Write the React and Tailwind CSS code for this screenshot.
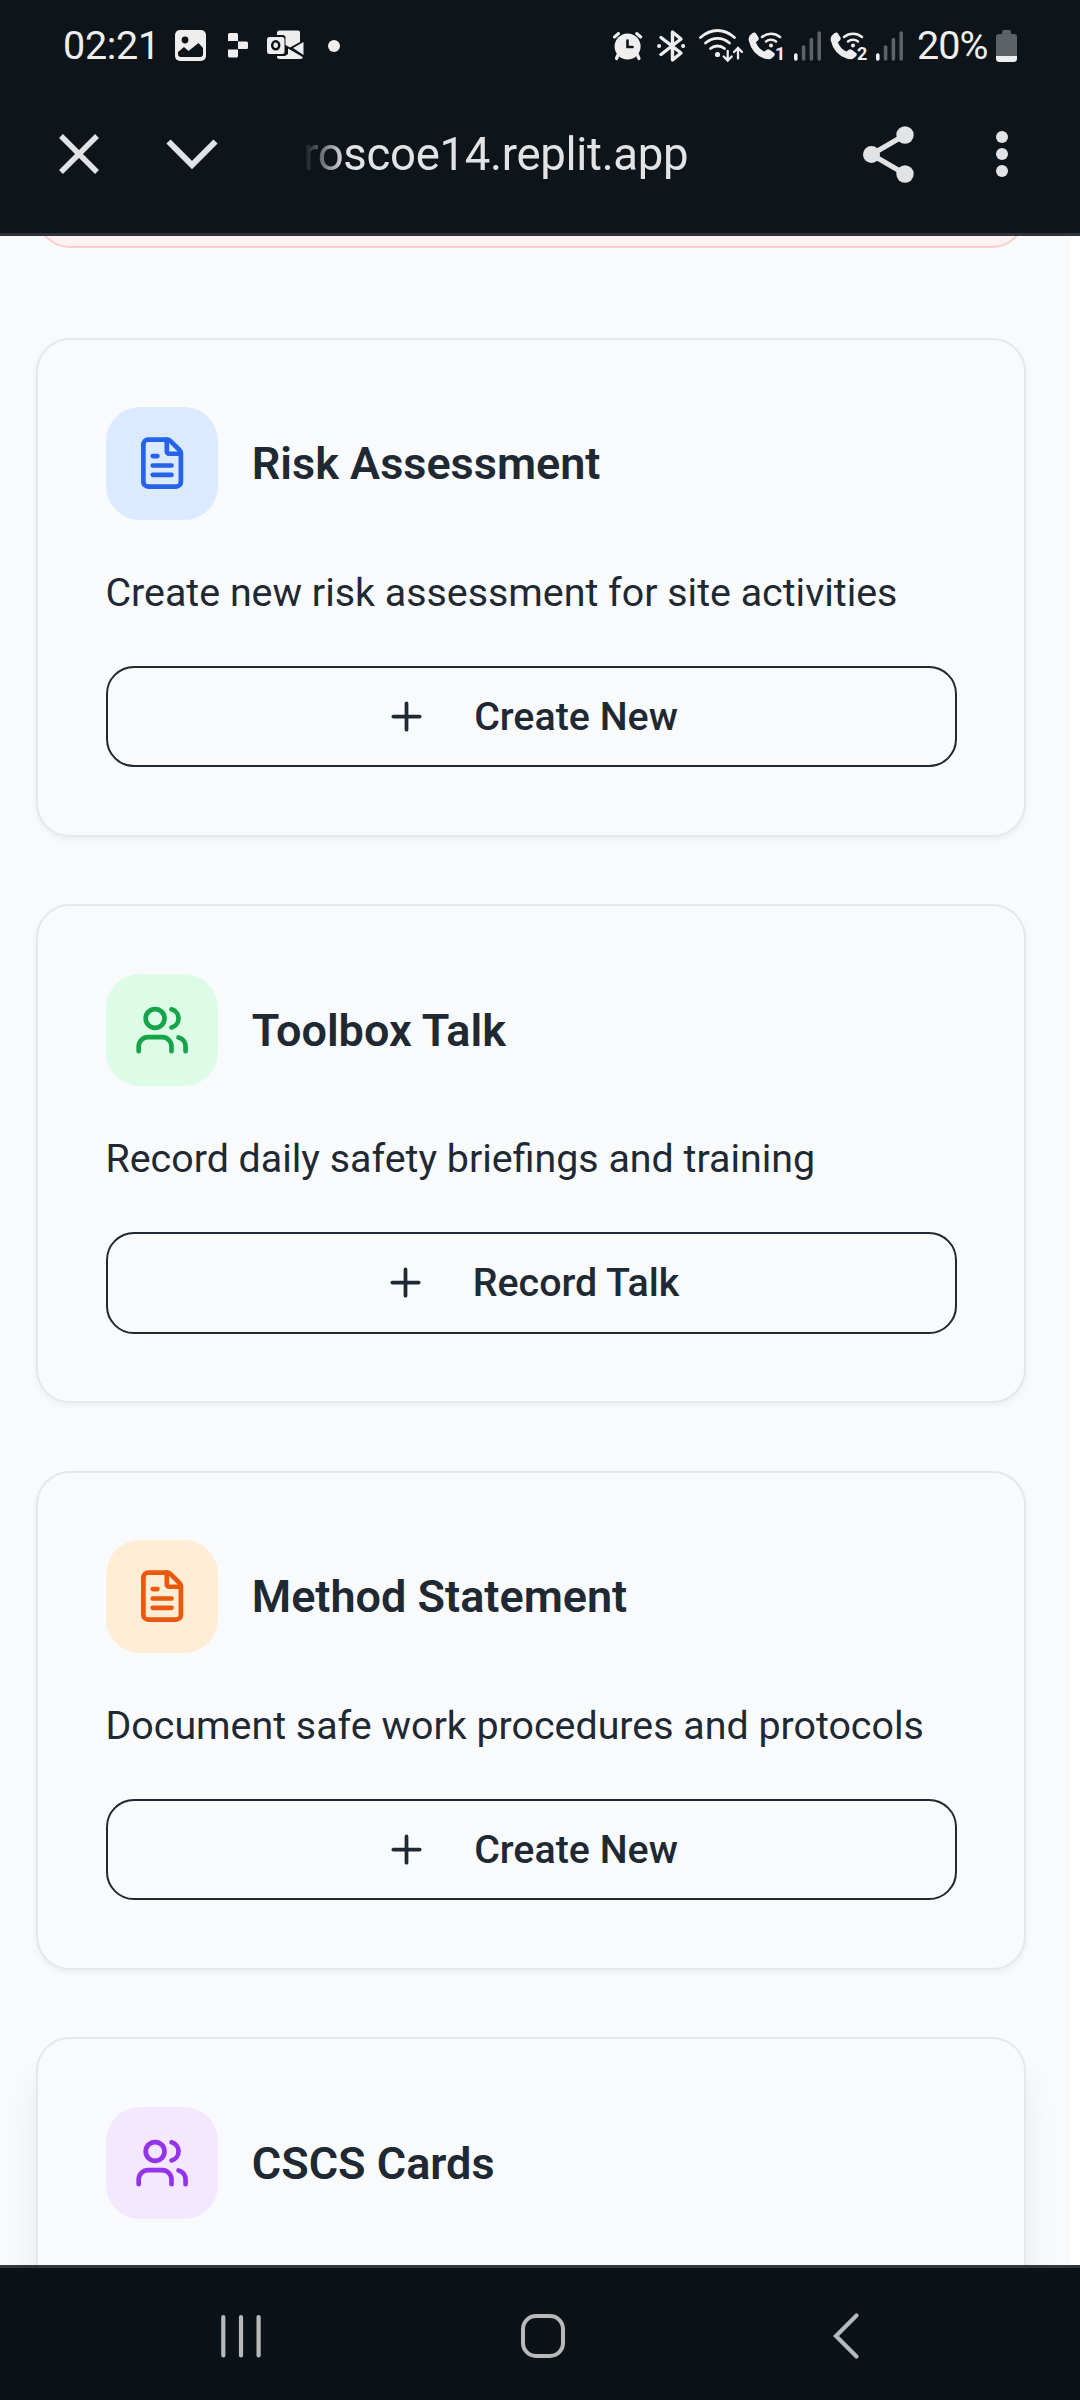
import React from "react";
import { FileText, Plus, Users } from "lucide-react";

const CARDS = [
  {
    title: "Risk Assessment",
    text: "Create new risk assessment for site activities",
    action: "Create New",
    icon: "file",
    tone: "bg-[#dbeafe] text-[#2563eb]",
  },
  {
    title: "Toolbox Talk",
    text: "Record daily safety briefings and training",
    action: "Record Talk",
    icon: "users",
    tone: "bg-[#dcfce7] text-[#16a34a]",
  },
  {
    title: "Method Statement",
    text: "Document safe work procedures and protocols",
    action: "Create New",
    icon: "file",
    tone: "bg-[#ffedd5] text-[#ea580c]",
  },
  {
    title: "CSCS Cards",
    icon: "users",
    tone: "bg-[#f3e8ff] text-[#9333ea]",
    raised: true,
  },
];

function ImageIcon() {
  return (
    <svg className="ml-[17px] shrink-0" width="32" height="34" viewBox="176 29 32 34">
      <rect x="176" y="30" width="31" height="31" rx="5" fill="#eeeeee" />
      <circle cx="186" cy="40" r="3.4" fill="#0d141a" />
      <path d="M179 54v-2l6-5 4.500 4 10-8 4.500 5v6q0 3-3 3h-19q-3 0-3-3z" fill="#0d141a" />
    </svg>
  );
}

function ReplitIcon() {
  return (
    <svg className="ml-[20px] shrink-0" width="22" height="34" viewBox="228 29 22 34" fill="#eeeeee">
      <path d="M230.500 33h7q1.500 0 1.500 1.500V41h-10v-6.500q0-1.500 1.500-1.500zM239 41.500h8.500q1.500 0 1.500 1.500v4.500q0 1.500-1.500 1.500H239zM229 49.500h10V56q0 1.500-1.500 1.500h-7Q229 57.500 229 56z" />
    </svg>
  );
}

function OutlookIcon() {
  return (
    <svg className="ml-[17px] shrink-0" width="39" height="34" viewBox="266 29 39 34">
      <path d="M277 33q0-2.500 2.500-2.500H298q2 0 2 2v9.500l-10 5.500-4.500-2.500v-8.500l-2-1.500H277z" fill="#eeeeee" />
      <path d="M303.500 42v13l-10.500-7zM277 56h8l3-2v-5.500L301 56l2 1.500q-1 1.500-3 1.500h-20.500q-2.500 0-2.500-2.500z" fill="#eeeeee" />
      <rect x="267" y="37" width="17.500" height="17" rx="2.500" fill="#eeeeee" />
      <ellipse cx="275.700" cy="45.300" rx="3.500" ry="4" fill="none" stroke="#0d141a" strokeWidth="2.500" />
    </svg>
  );
}

function AlarmIcon() {
  return (
    <svg className="shrink-0" width="30" height="34" viewBox="613 29 30 34" fill="none" stroke="#eeeeee" strokeLinecap="round">
      <circle cx="627.600" cy="46.500" r="13" fill="#eeeeee" stroke="none" />
      <path d="M614.500 37l4-3.500M640.700 37l-4-3.500" strokeWidth="3" />
      <path d="M618 55l-1.500 3.500M637.500 55l1.500 3.500" strokeWidth="3.200" />
      <path d="M627.500 40.500v6.500h5" stroke="#0d141a" strokeWidth="2.600" />
    </svg>
  );
}

function BluetoothIcon() {
  return (
    <svg className="ml-[14px] shrink-0" width="29" height="34" viewBox="657 29 29 34" fill="none" stroke="#eeeeee" strokeWidth="3.400" strokeLinecap="round" strokeLinejoin="round">
      <path d="M661 37.500l20 15.500-8.500 7V32l8.500 7-20 15.500" />
      <path d="M659 46h.2M683 46h.2" strokeWidth="3.800" />
    </svg>
  );
}

function WifiIcon() {
  return (
    <svg className="ml-[12px] shrink-0" width="46" height="34" viewBox="698 29 46 34" fill="none" stroke="#eeeeee" strokeLinecap="round">
      <path d="M700.500 37.500q8-7 17-7t17 7" strokeWidth="2.800" />
      <path d="M705.500 43q5.500-4.700 12-4.700t12 4.700" strokeWidth="2.800" />
      <path d="M710.500 48.500q3-2.500 7-2.500t7 2.500" strokeWidth="2.800" />
      <circle cx="717.500" cy="54.500" r="2.600" fill="#eeeeee" stroke="none" />
      <path d="M727.700 51v9M723.700 56.500l4 4 4-4M738 58.500v-10M734 52l4-4 4 4" strokeWidth="2.300" />
    </svg>
  );
}

function CallWifiIcon({ slot, spacing }) {
  return (
    <div className={spacing}>
      <svg width="38" height="34" viewBox="748 29 38 34">
        <path d="M751.500 34q3-2.500 4.500-.5l2.500 4q.8 1.700-.6 3l-2 1.700q2.200 6.300 8.500 9.300l2.300-1.800q1.500-1 3 0l4.500 3.200q1.500 1.500-.5 3.600-3 3.700-8.500 2.300-13-4-16.500-18.300-.5-4.500 2.800-6.500z" fill="#eeeeee" />
        <path d="M762 37q4-3.200 9-3.200t9 3.200M766 41.500q2.200-1.700 5-1.700t5 1.700" fill="none" stroke="#eeeeee" strokeWidth="2.500" strokeLinecap="round" />
        <circle cx="771" cy="45.500" r="2" fill="#eeeeee" />
        <text x="775" y="59.500" fontSize="18" fontWeight="700" fontFamily="Roboto, sans-serif" fill="#eeeeee">{slot}</text>
      </svg>
    </div>
  );
}

function SignalIcon() {
  return (
    <svg className="ml-[7px] shrink-0" width="29" height="34" viewBox="793 29 29 34" strokeWidth="3.600" strokeLinecap="round">
      <path d="M795.800 55v4" stroke="#eeeeee" />
      <path d="M803.600 47v12M811.400 39.500v19.500M819.200 33v26" stroke="#5d6267" />
    </svg>
  );
}

function BatteryIcon() {
  return (
    <svg className="ml-[5px] shrink-0" width="23" height="34" viewBox="995 28 23 34">
      <path d="M1002 31q0-2 2-2h5q2 0 2 2v2h3q3 0 3 3v19h-21V36q0-3 3-3h3z" fill="#5d6267" />
      <path d="M996 55h21v2.500q0 3.500-3.500 3.500h-14q-3.500 0-3.500-3.500z" fill="#eeeeee" />
    </svg>
  );
}

function StatusBar() {
  return (
    <div className="flex h-[92px] items-center justify-between pl-[63px] pr-[62px] text-[39.500px] leading-[46px] text-[#eeeeee]">
      <div className="flex items-center">
        <span className="w-[95px] whitespace-nowrap tracking-[-0.3px]">02:21</span>
        <ImageIcon />
        <ReplitIcon />
        <OutlookIcon />
        <span className="ml-[23px] mt-[-1px] size-[12px] rounded-full bg-[#eeeeee]" />
      </div>
      <div className="flex items-center">
        <AlarmIcon />
        <BluetoothIcon />
        <WifiIcon />
        <CallWifiIcon slot="1" spacing="ml-[4px] shrink-0" />
        <SignalIcon />
        <CallWifiIcon slot="2" spacing="ml-[8px] shrink-0" />
        <SignalIcon />
        <span className="ml-[13px] w-[73px] whitespace-nowrap tracking-[-0.9px]">20%</span>
        <BatteryIcon />
      </div>
    </div>
  );
}

function BrowserBar() {
  return (
    <div className="flex h-[124px] items-center pl-[57px] text-[#e2e3e5]">
      <svg className="shrink-0" width="44" height="44" viewBox="57 132 44 44" stroke="currentColor" strokeWidth="5.500">
        <path d="M61 136l36 36M97 136l-36 36" />
      </svg>
      <svg className="ml-[64px] shrink-0" width="54" height="44" viewBox="165 132 54 44" fill="none" stroke="currentColor" strokeWidth="6">
        <path d="M168.500 141.500l23.500 23.500 23.500-23.500" />
      </svg>
      <div className="ml-[84px] mt-[2px] w-[400px] whitespace-nowrap text-[45.500px] leading-[56px] tracking-[-0.3px] [mask-image:linear-gradient(to_right,transparent,black_42px)]">
        roscoe14.replit.app
      </div>
      <svg className="ml-[158px] shrink-0" width="54" height="60" viewBox="861 124 54 60" fill="currentColor">
        <path d="M905 135l-33.500 19.500L905 174" fill="none" stroke="currentColor" strokeWidth="5.200" />
        <circle cx="905" cy="135" r="8.700" />
        <circle cx="871.500" cy="154.500" r="8.500" />
        <circle cx="905" cy="174" r="8.700" />
      </svg>
      <svg className="ml-[79px] shrink-0" width="16" height="50" viewBox="994 129 16 50" fill="currentColor">
        <circle cx="1002" cy="137" r="6" />
        <circle cx="1002" cy="154" r="6" />
        <circle cx="1002" cy="171" r="6" />
      </svg>
    </div>
  );
}

function ActionCard({ card }) {
  const Icon = card.icon === "file" ? FileText : Users;
  const shadow = card.raised
    ? "min-h-[499px] shadow-[0_28px_42px_-8px_rgba(0,0,0,0.1),0_11px_17px_-11px_rgba(0,0,0,0.1)]"
    : "shadow-[0_3px_6px_0_rgba(0,0,0,0.05)]";
  return (
    <section className={`shrink-0 rounded-[34px] border-2 border-[#e5e7eb] bg-[#f9fafc] p-[67.5px] ${shadow}`}>
      <div className="flex items-center gap-[33.75px]">
        <div className={`flex size-[112.5px] items-center justify-center rounded-[34px] ${card.tone}`}>
          <Icon size={56.25} strokeWidth={2} />
        </div>
        <h2 className="mt-[1.5px] whitespace-nowrap text-[45px] font-semibold leading-[70px]">{card.title}</h2>
      </div>
      {card.text && (
        <p className="mt-[45px] whitespace-nowrap text-[39.375px] leading-[56.25px]">{card.text}</p>
      )}
      {card.action && (
        <button className="mt-[45px] flex h-[101.25px] w-full items-center justify-center gap-[45px] rounded-[28px] border-2 border-[#1f2933] text-[39.375px] font-medium leading-[56.25px]">
          <Plus size={45} strokeWidth={2} />
          <span className="mt-[1px]">{card.action}</span>
        </button>
      )}
    </section>
  );
}

function NavBar() {
  return (
    <nav className="flex h-[135px] shrink-0 items-center border-t-[3px] border-[#2f373d] bg-[#0b1319] pl-[218px] pt-[3px] text-[#b8b9ba]">
      <svg className="shrink-0" width="46" height="50" viewBox="218 2311 46 50" stroke="currentColor" strokeWidth="4.200" strokeLinecap="round">
        <path d="M223.300 2317v38.500M241 2317v38.500M258.600 2317v38.500" />
      </svg>
      <svg className="ml-[254px] shrink-0" width="50" height="50" viewBox="518 2311 50 50" fill="none" stroke="currentColor" strokeWidth="4">
        <rect x="523" y="2316" width="40" height="40" rx="13" />
      </svg>
      <svg className="ml-[262px] shrink-0" width="34" height="50" viewBox="830 2311 34 50" fill="none" stroke="currentColor" strokeWidth="4.200" strokeLinecap="round">
        <path d="M856.500 2315.500l-20.500 20.500 20.500 20.500" />
      </svg>
    </nav>
  );
}

export default function App() {
  return (
    <div className="flex h-[2400px] w-[1080px] flex-col overflow-hidden bg-white font-['Roboto',sans-serif] text-[#1f2933]">
      <header className="h-[236px] shrink-0 border-b-[3px] border-[#2f3339] bg-[#0d141a]">
        <StatusBar />
        <BrowserBar />
      </header>
      <main className="min-h-0 w-[1071px] flex-1 overflow-hidden bg-[#f9fafc] pl-[36px] pr-[45px]">
        <div className="mt-[-88px] h-[100px] rounded-[34px] border-2 border-[#f9cccc] bg-[#fef2f2]" />
        <div className="mt-[89.5px] flex flex-col gap-[67.5px]">
          {CARDS.map((card) => (
            <ActionCard key={card.title} card={card} />
          ))}
        </div>
      </main>
      <NavBar />
    </div>
  );
}
